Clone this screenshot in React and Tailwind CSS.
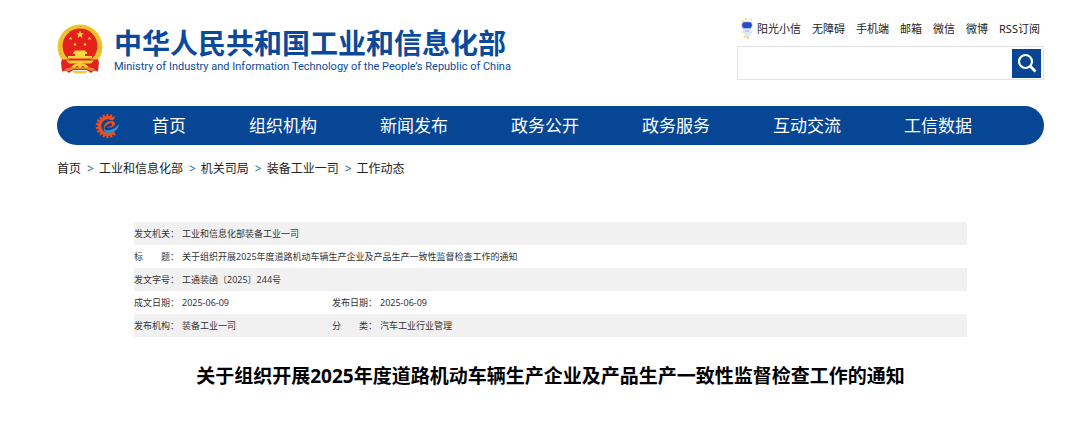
import React, { useState } from 'react';

const TOP_LINKS = ['无障碍', '手机端', '邮箱', '微信', '微博', 'RSS订阅'];

const NAV_ITEMS = ['首页', '组织机构', '新闻发布', '政务公开', '政务服务', '互动交流', '工信数据'];

const CRUMBS = ['首页', '工业和信息化部', '机关司局', '装备工业一司', '工作动态'];

const DOC_TITLE = '关于组织开展2025年度道路机动车辆生产企业及产品生产一致性监督检查工作的通知';

// 每行一到两组「标签 / 内容」
const DOC_ROWS = [
    [['发文机关：', '工业和信息化部装备工业一司']],
    [['标　　题：', DOC_TITLE]],
    [['发文字号：', '工通装函〔2025〕244号']],
    [['成文日期：', '2025-06-09'], ['发布日期：', '2025-06-09']],
    [['发布机构：', '装备工业一司'], ['分　　类：', '汽车工业行业管理']],
];

const STAR = 'M0-1 .235-.324 .951-.309 .38.124 .588.809 0 .4-.588.809-.38.124-.951-.309-.235-.324Z';

const Emblem = () => (
    <svg viewBox="0 0 46 50" className="h-[50px] w-[46px] shrink-0" aria-hidden="true">
        <circle cx="23" cy="23" r="22.5" fill="#f1c52f" />
        <circle cx="23" cy="23" r="20.5" fill="none" stroke="#e3ae22" strokeWidth="1" strokeDasharray="2 2" />
        <circle cx="23" cy="22" r="17.5" fill="#e5201d" />
        <g fill="#fbd93c">
            <path d={STAR} transform="translate(23 10.5) scale(4.2)" />
            <path d={STAR} transform="translate(13.5 14.5) scale(2)" />
            <path d={STAR} transform="translate(32.5 14.5) scale(2)" />
            <path d={STAR} transform="translate(18 20.5) scale(2)" />
            <path d={STAR} transform="translate(28 20.5) scale(2)" />
            <path d="M16 28.5 18 26.5h10l2 2v1.5h-2v2h7v2.5H11v-2.5h7v-2h-2Z" />
        </g>
        <path d="M5 35.5h36l1 3-1 9-4-1-3 2.5-4-3H16l-4 3-3-2.5-4 1-1-9Z" fill="#e02320" />
        <path d="M9 36.5h28l-3 3H12Z" fill="#f6cb32" />
        <path d="M14 43.5c2-3 5-4.5 9-4.5s7 1.5 9 4.5l-4 .5-2-2h-6l-2 2Z" fill="#f6cb32" />
        <path d="m8 45 5-1.5h20l5 1.5-3 2-5-2H16l-5 2Z" fill="#e9932a" />
        <circle cx="23" cy="42.5" r="1.8" fill="#f6cb32" />
        <path d="M15 47h16l-3 2.5H18Z" fill="#f6cb32" />
    </svg>
);

const Robot = () => (
    <svg viewBox="0 0 16 22" className="h-[22px] w-4 shrink-0" aria-hidden="true">
        <g fill="#f2d15a">
            <circle cx="1.5" cy="3" r=".9" />
            <circle cx="5" cy="1" r=".9" />
            <circle cx="10" cy="1.5" r=".9" />
            <circle cx="1.5" cy="14" r=".8" />
            <circle cx="3.5" cy="18.5" r=".9" />
            <circle cx="7" cy="20.5" r=".9" />
        </g>
        <path d="M3 10.5h6l1.5 4-2 1-.5 4H5l-.5-4-2-1Z" fill="#e3eaf8" stroke="#c5d0ea" strokeWidth=".6" />
        <rect x=".5" y="3.5" width="11" height="7.5" rx="3.6" fill="#a9bbf3" />
        <rect x="1.3" y="4.2" width="9.4" height="5.8" rx="2.2" fill="#2a49c4" />
        <path d="M4 13h4" stroke="#8ea6e4" strokeWidth="1" />
    </svg>
);

const GearLogo = () => (
    <svg viewBox="0 0 26 26" className="h-[26px] w-[26px] shrink-0" aria-hidden="true">
        <path d="M20 20.5A10.5 10.5 0 1 1 19.500 5" fill="none" stroke="#e8501f" strokeWidth="3" strokeDasharray="2 1.6" />
        <path d="M19 19A8.5 8.5 0 1 1 18.5 6.5" fill="none" stroke="#e8501f" strokeWidth="3.6" />
        <path d="M9 17c-1-5 2-9 7-9 4 0 5 3 3 5-2 1.5-5 2-7 1.5 1-1 4-1 5-2.5.6-1.5-1-2-2.500-1.500-3 .8-5 3.500-5.500 6.500Z" fill="#e8501f" />
        <path d="M9 15c1 4 9 3 15.5-4C23 17 18.5 20 14 20c-3.5 0-5.5-2-5-5Z" fill="#3a8fd0" />
    </svg>
);

const Header = () => {
    const [keyword, setKeyword] = useState('');

    return (
        <header className="flex items-start justify-between">
            <a href="#" className="flex gap-[11px] pt-6 text-[#0b4a9b]">
                <Emblem />
                <div className="pt-px">
                    <h1 className="text-[28px] leading-9 font-bold whitespace-nowrap">中华人民共和国工业和信息化部</h1>
                    <p className="font-['Roboto',sans-serif] text-[11px] leading-3 whitespace-nowrap">
                        Ministry of Industry and Information Technology of the People’s Republic of China
                    </p>
                </div>
            </a>

            <div className="flex w-[307px] flex-col pt-[18px]">
                <div className="flex h-[22px] items-center gap-[11px] text-[11px] whitespace-nowrap text-[#222]">
                    <a href="#" className="flex items-center pl-1">
                        <Robot />
                        阳光小信
                    </a>
                    {TOP_LINKS.map(item => (
                        <a key={item} href="#">{item}</a>
                    ))}
                </div>

                <form
                    onSubmit={e => e.preventDefault()}
                    className="mt-[6px] flex h-[34px] items-center border border-[#e3e3e3] pr-[2px]"
                >
                    <input
                        type="text"
                        aria-label="搜索"
                        value={keyword}
                        onChange={e => setKeyword(e.target.value)}
                        className="h-full min-w-0 flex-1 px-2 text-xs outline-none"
                    />
                    <button type="submit" aria-label="搜索" className="flex size-[29px] items-center justify-center bg-[#064695]">
                        <svg viewBox="0 0 20 20" className="size-5" fill="none" stroke="#fff" aria-hidden="true">
                            <circle cx="8.5" cy="8.5" r="6.5" strokeWidth="2.2" />
                            <path d="m13 13 5.5 5.5" strokeWidth="2.8" />
                        </svg>
                    </button>
                </form>
            </div>
        </header>
    );
};

const App = () => {
    return (
        <div lang="zh-CN" className="bg-white pr-9 pb-10 pl-[57px] font-['Noto_Sans','Noto_Sans_CJK_SC',sans-serif]">
            <Header />

            <nav className="mt-[26px] flex h-[39px] items-center gap-[63px] rounded-full bg-[#064695] pl-[38px] text-[17px] whitespace-nowrap text-white">
                <div className="flex items-center gap-[31px]">
                    <GearLogo />
                    <a href="#">{NAV_ITEMS[0]}</a>
                </div>
                {NAV_ITEMS.slice(1).map(item => (
                    <a key={item} href="#">{item}</a>
                ))}
            </nav>

            <ol className="mt-[14px] flex gap-[6px] text-[12px] leading-5 whitespace-nowrap text-[#222]">
                {CRUMBS.map((crumb, index) => (
                    <li key={crumb} className="flex gap-[5px]">
                        {index > 0 && <span className="text-[#2a6496]">&gt;</span>}
                        <a href="#">{crumb}</a>
                    </li>
                ))}
            </ol>

            <main className="px-[77px] pt-[43px]">
                <table className="w-full table-fixed text-left text-[9px] text-[#333]">
                    <colgroup>
                        <col className="w-12" />
                        <col className="w-[150px]" />
                        <col className="w-12" />
                        <col />
                    </colgroup>
                    <tbody>
                        {DOC_ROWS.map((pairs, index) => (
                            <tr key={index} className="h-[23px] whitespace-nowrap odd:bg-[#f1f1f1]">
                                {pairs.map(([label, value]) => (
                                    <React.Fragment key={label}>
                                        <th scope="row" className="p-0 font-normal">{label}</th>
                                        <td colSpan={pairs.length === 1 ? 3 : 1} className="p-0">{value}</td>
                                    </React.Fragment>
                                ))}
                            </tr>
                        ))}
                    </tbody>
                </table>

                <h2 className="mt-[25px] text-center text-[19px] leading-7 font-bold text-black">{DOC_TITLE}</h2>
            </main>
        </div>
    );
};

export default App;
